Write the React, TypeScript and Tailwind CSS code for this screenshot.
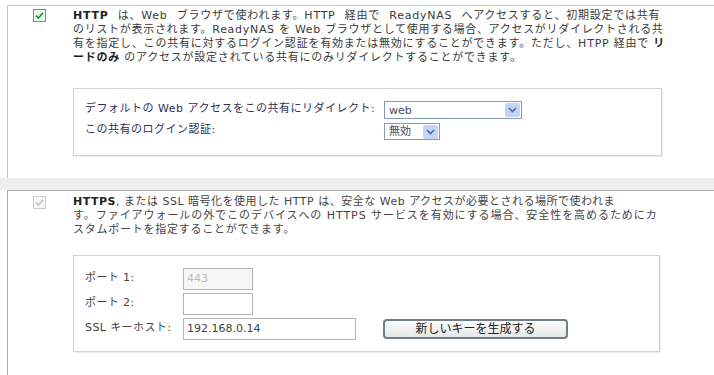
import type { ReactNode } from "react";

function CheckMark({ disabled }: { disabled?: boolean }) {
  return (
    <svg width="13" height="13" viewBox="0 0 13 13">
      <rect
        x="0.5"
        y="0.5"
        width="12"
        height="12"
        fill={disabled ? "#f6f6f6" : "#eef6ef"}
        stroke={disabled ? "#cccccc" : "#6f9a7c"}
      />
      <path
        d="M3 6.6 L5.4 9 L10 3.9"
        fill="none"
        stroke={disabled ? "#c6c6c6" : "#1f9e35"}
        strokeWidth="1.8"
      />
    </svg>
  );
}

function Select({ value, className }: { value: string; className: string }) {
  return (
    <div className={`flex items-center border border-[#7f9db9] bg-white ${className}`}>
      <span className="flex-1 pl-[4px] text-[11px] leading-none text-[#4a4a5a]">{value}</span>
      <span className="mr-[1px] flex h-[14px] w-[15px] items-center justify-center rounded-[2px] bg-[#c3d4f6]">
        <svg width="9" height="6" viewBox="0 0 9 6">
          <path d="M1 1 L4.5 4.5 L8 1" fill="none" stroke="#4d6aa6" strokeWidth="1.6" />
        </svg>
      </span>
    </div>
  );
}

function TextBox({ value, className }: { value?: string; className: string }) {
  return (
    <div className={`flex h-[22px] items-center border border-[#b4b4b4] pl-[3px] text-[11px] ${className}`}>
      {value}
    </div>
  );
}

// one wrapped line of the description, tracked out to the width it has in the screenshot
function Line({ children, className = "" }: { children: ReactNode; className?: string }) {
  return <span className={`block whitespace-nowrap ${className}`}>{children}</span>;
}

function Panel({ children, checked }: { children: ReactNode; checked?: boolean }) {
  return (
    <div className="flex">
      <div className="w-[65px] shrink-0 pl-[25px]">
        <CheckMark disabled={!checked} />
      </div>
      <div className="flex-1">{children}</div>
    </div>
  );
}

export default function App() {
  return (
    <div className="h-[375px] w-[714px] overflow-hidden bg-white pt-[5px] font-['DejaVu_Sans','Noto_Sans_CJK_JP',sans-serif] text-[11px] leading-[14px] text-[#3a3a3a]">
      {/* HTTP */}
      <section className="ml-[7px] h-[173px] border-l border-t border-[#c6c6c6] pt-[3px]">
        <Panel checked>
          <div>
            <Line className="tracking-[0.75px] [word-spacing:5px]">
              <b className="text-[#1e1e1e]">HTTP</b> は、Web ブラウザで使われます。HTTP 経由で ReadyNAS へアクセスすると、初期設定では共有
            </Line>
            <Line className="tracking-[0.7px]">
              のリストが表示されます。ReadyNAS を Web ブラウザとして使用する場合、アクセスがリダイレクトされる共
            </Line>
            <Line className="tracking-[0.77px]">
              有を指定し、この共有に対するログイン認証を有効または無効にすることができます。ただし、HTPP 経由で <b className="text-[#1e1e1e]">リ</b>
            </Line>
            <Line className="tracking-[0.75px]">
              <b className="text-[#1e1e1e]">ードのみ</b> のアクセスが設定されている共有にのみリダイレクトすることができます。
            </Line>
          </div>
          <div className="mt-[23px] w-[589px] border border-[#d2d2d2] bg-white pb-[15px] pl-[11px] pt-[12px] shadow-[1px_1px_0_#eeeeee]">
            <div className="grid grid-cols-[299px_1fr] items-center gap-y-[4px] text-[#2e2e58]">
              <span className="-mt-[3px] whitespace-nowrap tracking-[0.5px]">デフォルトの Web アクセスをこの共有にリダイレクト:</span>
              <Select value="web" className="h-[18px] w-[138px]" />
              <span className="-mt-[3px] whitespace-nowrap tracking-[0.5px]">この共有のログイン認証:</span>
              <Select value="無効" className="h-[17px] w-[56px]" />
            </div>
          </div>
        </Panel>
      </section>

      <div className="h-[12px] bg-[#eeeeee]" />

      {/* HTTPS */}
      <section className="ml-[7px] h-[200px] border-l border-t border-[#aaaaaa] pt-[5px]">
        <Panel>
          <div className="-mt-[1px] text-[#444444]">
            <Line className="tracking-[0.5px]">
              <b className="text-[#222222]">HTTPS</b>, または SSL 暗号化を使用した HTTP は、安全な Web アクセスが必要とされる場所で使われま
            </Line>
            <Line className="tracking-[0.94px]">
              す。ファイアウォールの外でこのデバイスへの HTTPS サービスを有効にする場合、安全性を高めるためにカ
            </Line>
            <Line className="tracking-[0.75px]">スタムポートを指定することができます。</Line>
          </div>
          <div className="mt-[18px] w-[587px] border border-[#d2d2d2] bg-white pb-[11px] pl-[11px] pt-[12px] shadow-[1px_1px_0_#eeeeee]">
            <div className="grid grid-cols-[98px_1fr] items-center gap-y-[3px] text-[#444444]">
              <span className="-mt-[2px] whitespace-nowrap tracking-[0.4px]">ポート 1:</span>
              <TextBox value="443" className="w-[70px] bg-[#f6f6f6] text-[#bdbdbd]" />
              <span className="-mt-[2px] whitespace-nowrap tracking-[0.4px]">ポート 2:</span>
              <TextBox className="w-[70px] bg-white" />
              <span className="-mt-[2px] whitespace-nowrap tracking-[0.4px]">SSL キーホスト:</span>
              <div className="flex items-center gap-[27px]">
                <TextBox value="192.168.0.14" className="w-[173px] bg-white text-[#444444]" />
                <button className="flex h-[20px] w-[185px] items-center justify-center rounded-[4px] border-2 border-[#6f7f85] bg-gradient-to-b from-[#fbfbfb] to-[#e6e8e8] text-[12px] text-[#222222]">
                  新しいキーを生成する
                </button>
              </div>
            </div>
          </div>
        </Panel>
      </section>
    </div>
  );
}
